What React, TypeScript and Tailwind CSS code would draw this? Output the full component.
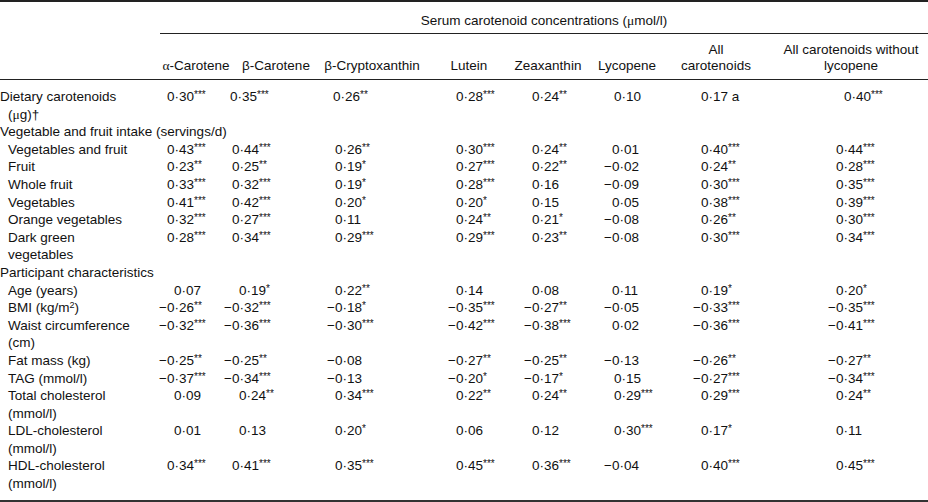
import React from "react";

type Row =
  | { kind: "section"; label: string }
  | {
      kind: "row";
      lines: React.ReactNode[];
      sub?: boolean;
      values: string[];
      shifts?: Record<number, string>;
    };

const rows: Row[] = [
  {
    kind: "row",
    lines: [
      "Dietary carotenoids",
      <>
        (<span className="font-['Liberation_Serif',serif]">μ</span>g)†
      </>,
    ],
    values: ["0·30***", "0·35***", "0·26**", "0·28***", "0·24**", "0·10", "0·17 a", "0·40***"],
    shifts: { 1: "-ml-[2px]", 2: "-ml-[2px]", 5: "pl-[2px]", 7: "pl-[8px]" },
  },
  { kind: "section", label: "Vegetable and fruit intake (servings/d)" },
  {
    kind: "row",
    sub: true,
    lines: ["Vegetables and fruit"],
    values: ["0·43***", "0·44***", "0·26**", "0·30***", "0·24**", "0·01", "0·40***", "0·44***"],
  },
  {
    kind: "row",
    sub: true,
    lines: ["Fruit"],
    values: ["0·23**", "0·25**", "0·19*", "0·27***", "0·22**", "-0·02", "0·24**", "0·28***"],
  },
  {
    kind: "row",
    sub: true,
    lines: ["Whole fruit"],
    values: ["0·33***", "0·32***", "0·19*", "0·28***", "0·16", "-0·09", "0·30***", "0·35***"],
  },
  {
    kind: "row",
    sub: true,
    lines: ["Vegetables"],
    values: ["0·41***", "0·42***", "0·20*", "0·20*", "0·15", "0·05", "0·38***", "0·39***"],
  },
  {
    kind: "row",
    sub: true,
    lines: ["Orange vegetables"],
    values: ["0·32***", "0·27***", "0·11", "0·24**", "0·21*", "-0·08", "0·26**", "0·30***"],
  },
  {
    kind: "row",
    sub: true,
    lines: ["Dark green", "vegetables"],
    values: ["0·28***", "0·34***", "0·29***", "0·29***", "0·23**", "-0·08", "0·30***", "0·34***"],
  },
  { kind: "section", label: "Participant characteristics" },
  {
    kind: "row",
    sub: true,
    lines: ["Age (years)"],
    values: ["0·07", "0·19*", "0·22**", "0·14", "0·08", "0·11", "0·19*", "0·20*"],
    shifts: { 0: "pl-[7px]", 1: "pl-[7px]" },
  },
  {
    kind: "row",
    sub: true,
    lines: [
      <>
        BMI (kg/m<sup className="text-[9px]">2</sup>)
      </>,
    ],
    values: ["-0·26**", "-0·32***", "-0·18*", "-0·35***", "-0·27**", "-0·05", "-0·33***", "-0·35***"],
  },
  {
    kind: "row",
    sub: true,
    lines: ["Waist circumference", "(cm)"],
    values: ["-0·32***", "-0·36***", "-0·30***", "-0·42***", "-0·38***", "0·02", "-0·36***", "-0·41***"],
  },
  {
    kind: "row",
    sub: true,
    lines: ["Fat mass (kg)"],
    values: ["-0·25**", "-0·25**", "-0·08", "-0·27**", "-0·25**", "-0·13", "-0·26**", "-0·27**"],
  },
  {
    kind: "row",
    sub: true,
    lines: ["TAG (mmol/l)"],
    values: ["-0·37***", "-0·34***", "-0·13", "-0·20*", "-0·17*", "0·15", "-0·27***", "-0·34***"],
    shifts: { 5: "pl-[2px]" },
  },
  {
    kind: "row",
    sub: true,
    lines: ["Total cholesterol", "(mmol/l)"],
    values: ["0·09", "0·24**", "0·34***", "0·22**", "0·24**", "0·29***", "0·29***", "0·24**"],
    shifts: { 0: "pl-[7px]", 1: "pl-[7px]", 5: "pl-[2px]" },
  },
  {
    kind: "row",
    sub: true,
    lines: ["LDL-cholesterol", "(mmol/l)"],
    values: ["0·01", "0·13", "0·20*", "0·06", "0·12", "0·30***", "0·17*", "0·11"],
    shifts: { 0: "pl-[7px]", 1: "pl-[7px]", 5: "pl-[2px]" },
  },
  {
    kind: "row",
    sub: true,
    lines: ["HDL-cholesterol", "(mmol/l)"],
    values: ["0·34***", "0·41***", "0·35***", "0·45***", "0·36***", "-0·04", "0·40***", "0·45***"],
  },
];

const Value = ({ v }: { v: string }) => {
  const neg = v.startsWith("-");
  const body = neg ? v.slice(1) : v;
  const m = body.match(/^([^*]*)(\**)$/);
  const num = m ? m[1] : body;
  const stars = m ? m[2] : "";
  return (
    <>
      {neg && (
        <span className="inline-block w-[10px] -ml-[10px] text-right">−</span>
      )}
      {num}
      {stars && (
        <span className="text-[10px] leading-none align-[3px]">{stars}</span>
      )}
    </>
  );
};

const dataCols =
  "grid grid-cols-[167px_65px_103px_121px_76px_80px_89px_135px_92px]";
const headCols =
  "grid grid-cols-[160px_76px_80px_116px_74px_84px_74px_104px_160px]";

export default function App() {
  return (
    <div className="w-[928px] h-[502px] bg-white text-[#111] text-[13.5px] font-['Liberation_Sans',Arial,sans-serif] flex flex-col">
      <div className="h-[2px] bg-[#222]" />

      <div className={headCols}>
        <div />
        <div className="col-span-8 h-[32px] flex items-center justify-center pt-[7px] border-b border-[#222]">
          Serum carotenoid concentrations (
          <span className="font-['Liberation_Serif',serif]">μ</span>mol/l)
        </div>
      </div>

      <div className={`${headCols} h-[46px] items-end leading-[16px] pb-[5px] border-b border-[#222]`}>
        <div />
        <div className="text-center pr-[4px]">
          <span className="font-['Liberation_Serif',serif]">α</span>-Carotene
        </div>
        <div className="text-center">β-Carotene</div>
        <div className="text-center pr-[4px]">β-Cryptoxanthin</div>
        <div className="text-center">Lutein</div>
        <div className="text-center">Zeaxanthin</div>
        <div className="text-center">Lycopene</div>
        <div className="text-center">
          All
          <br />
          carotenoids
        </div>
        <div className="text-center pl-[6px]">
          All carotenoids without
          <br />
          lycopene
        </div>
      </div>

      <div className="flex-1 pt-[8px] leading-[17.6px]">
        {rows.map((r, i) =>
          r.kind === "section" ? (
            <div key={i} className="whitespace-nowrap">
              {r.label}
            </div>
          ) : (
            <div key={i} className={dataCols}>
              <div className={r.sub ? "pl-[8px]" : ""}>
                {r.lines.map((l, j) => (
                  <div
                    key={j}
                    className={j > 0 && !r.sub ? "pl-[8px] whitespace-nowrap" : "whitespace-nowrap"}
                  >
                    {l}
                  </div>
                ))}
              </div>
              {r.values.map((v, k) => (
                <div key={k} className={`whitespace-nowrap ${r.shifts?.[k] ?? ""}`}>
                  <Value v={v} />
                </div>
              ))}
            </div>
          )
        )}
      </div>

      <div className="h-[2px] bg-[#333]" />
    </div>
  );
}
